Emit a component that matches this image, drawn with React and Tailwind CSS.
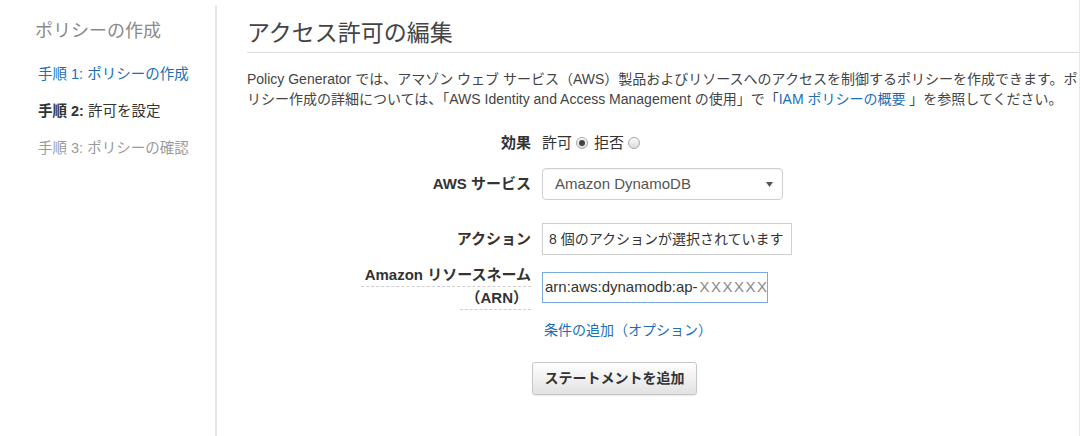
const Radio = ({ checked }) => (
  <span className="inline-flex items-center justify-center w-[12px] h-[12px] rounded-full border border-[#a9a9a9] bg-gradient-to-b from-[#fafafa] to-[#dcdcdc] ml-[4px] mr-[6px]">
    {checked && <span className="w-[6px] h-[6px] rounded-full bg-[#444]" />}
  </span>
);

const Label = ({ children }) => (
  <div className="w-[284px] shrink-0 text-right font-bold text-[15px] text-[#333]">{children}</div>
);

const App = () => {
  return (
    <div
      className="w-[1080px] h-[436px] flex overflow-hidden bg-white"
      style={{ fontFamily: '"Liberation Sans", "Noto Sans CJK JP", sans-serif' }}
    >
      {/* sidebar */}
      <div className="w-[217px] shrink-0 mt-[5px] pl-[35px] pt-[15px] border-r-2 border-[#e6e6e6]">
        <div className="text-[18px] leading-[22px] text-[#8a8a8a]">ポリシーの作成</div>
        <div className="mt-[22px] flex flex-col gap-[17px] text-[14.5px] leading-[20px] pl-[3px]">
          <div className="text-[#1a6fb5]">手順 1: ポリシーの作成</div>
          <div className="text-[#333]">
            <span className="font-bold">手順 2:</span> 許可を設定
          </div>
          <div className="text-[#9a9a9a]">手順 3: ポリシーの確認</div>
        </div>
      </div>

      {/* main */}
      <div className="flex-1 min-w-0 pl-[30px] border-r border-[#e8e8e8] overflow-hidden">
        <div className="pt-[18px] pb-[4px] border-b border-[#dcdcdc]">
          <h1 className="text-[23px] leading-[30px] text-[#444]">アクセス許可の編集</h1>
        </div>

        <p className="mt-[16px] text-[14px] leading-[20px] text-[#444] whitespace-nowrap">
          Policy Generator では、アマゾン ウェブ サービス（AWS）製品およびリソースへのアクセスを制御するポリシーを作成できます。ポ
          <br />
          リシー作成の詳細については、「AWS Identity and Access Management の使用」で「
          <span className="text-[#1a6fb5]">IAM ポリシーの概要</span> 」を参照してください。
        </p>

        {/* form */}
        <div className="mt-[23px] flex flex-col">
          <div className="flex items-center h-[22px]">
            <Label>効果</Label>
            <div className="ml-[11px] flex items-center text-[15px] text-[#333]">
              許可<Radio checked />拒否<Radio />
            </div>
          </div>

          <div className="mt-[14px] flex items-center">
            <Label>AWS サービス</Label>
            <div className="ml-[11px] w-[241px] h-[32px] flex items-center justify-between pl-[12px] pr-[9px] border border-[#cfcfcf] rounded-[4px] shadow-[inset_0_1px_1px_rgba(0,0,0,0.05)]">
              <span className="text-[15px] text-[#555]">Amazon DynamoDB</span>
              <svg width="7" height="5" viewBox="0 0 7 5">
                <polygon points="0,0 7,0 3.5,5" fill="#555" />
              </svg>
            </div>
          </div>

          <div className="mt-[23px] flex items-center">
            <Label>アクション</Label>
            <div className="ml-[11px] w-[250px] h-[32px] flex items-center pl-[6px] border border-[#cfcfcf] text-[14px] text-[#333] whitespace-nowrap overflow-hidden">
              8 個のアクションが選択されています
            </div>
          </div>

          <div className="mt-[9px] flex items-start">
            <div className="w-[284px] shrink-0 flex flex-col items-end font-bold text-[15px] leading-[22px] text-[#333]">
              <span className="pl-[4px] border-b border-dashed border-[#cfcfcf]">Amazon リソースネーム</span>
              <span className="pl-[6px] pr-[3px] border-b border-dashed border-[#cfcfcf]">（ARN）</span>
            </div>
            <div className="ml-[11px] mt-[8px] w-[226px] h-[31px] flex items-center pl-[2px] border border-[#79acdc] text-[15px] text-[#333] whitespace-nowrap overflow-hidden">
              arn:aws:dynamodb:ap-<span className="ml-[2px] text-[#8a8a8a] font-light tracking-[1.5px]">XXXXXX</span>
            </div>
          </div>

          <div className="mt-[10px] ml-[297px] text-[14px] leading-[20px] text-[#1a6fb5]">条件の追加（オプション）</div>

          <div className="mt-[22px] ml-[285px]">
            <button
              type="button"
              className="w-[165px] h-[33px] rounded-[3px] border border-[#c6c6c6] bg-gradient-to-b from-[#ffffff] to-[#e2e2e2] font-bold text-[14px] text-[#333] shadow-[0_1px_1px_rgba(0,0,0,0.08)]"
            >
              ステートメントを追加
            </button>
          </div>
        </div>
      </div>
    </div>
  );
};

export default App;
